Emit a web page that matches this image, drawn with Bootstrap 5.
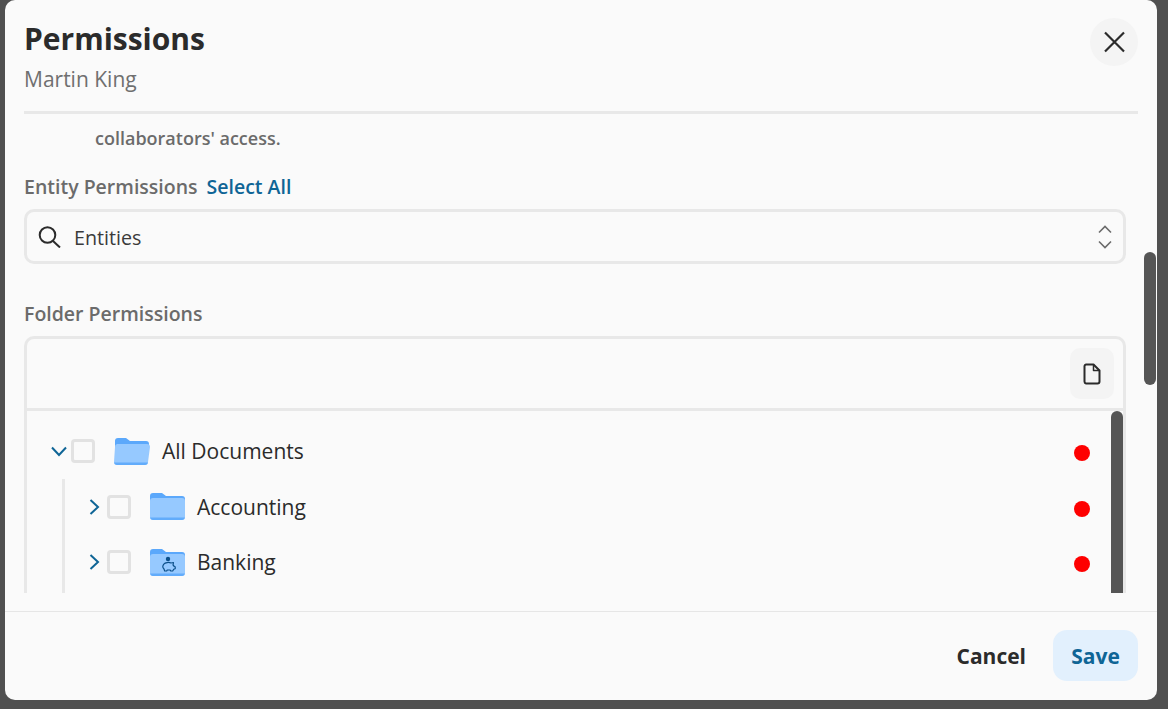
<!DOCTYPE html>
<html lang="en">
  <head>
    <meta charset="UTF-8" />
    <meta name="viewport" content="width=device-width, initial-scale=1" />
    <title>Permissions</title>
    <link
      href="https://cdn.jsdelivr.net/npm/bootstrap@5.3.0/dist/css/bootstrap.min.css"
      rel="stylesheet"
    />
    <style>
      html, body { height: 100%; overflow: hidden; }
      body { background: #505050; font-family: "Open Sans", sans-serif; color: #2b2b2b; }
      .perm-dialog { width: 1152px; height: 700px; margin-left: 5px; background: #fafafa; border-radius: 10px; position: relative; }
      .perm-head { height: 114px; margin: 0 19px; border-bottom: 3px solid #e8e8e8; position: relative; }
      .perm-title { font-size: 30px; font-weight: 700; line-height: 38px; padding-top: 20px; margin: 0; color: #2b2b2b; }
      .perm-sub { font-size: 21px; line-height: 27px; margin-top: 8px; color: #6f6f6f; }
      .perm-close { position: absolute; top: 18px; right: 0; width: 48px; height: 48px; border: 0; padding: 0; border-radius: 50%; background: #f4f4f4; }
      .perm-body { height: 479px; overflow: hidden; padding: 0 31px 0 19px; }
      .perm-note { font-size: 18px; font-weight: 600; line-height: 22px; color: #6b6b6b; padding: 13px 0 0 71px; }
      .perm-label { font-size: 19.500px; font-weight: 600; line-height: 24px; color: #6b6b6b; }
      .perm-entity { margin-top: 23px; gap: 9px; }
      .perm-link { font-size: 19.500px; font-weight: 600; color: #0f6596; text-decoration: none; }
      .perm-select { height: 55px; margin-top: 8px; border: 3px solid #e8e8e8; border-radius: 10px; padding: 0 11px 0 11px; font-size: 19.700px; color: #3a3a3a; }
      .perm-select-text { padding: 2px 0 0 5px; }
      .perm-folder-label { margin-top: 38px; }
      .perm-box { height: 260px; margin-top: 10px; border: 3px solid #e8e8e8; border-bottom: 0; border-radius: 10px 10px 0 0; }
      .perm-tools { height: 72px; border-bottom: 3px solid #e8e8e8; padding: 9px 9px 0 0; }
      .perm-tool { width: 44px; height: 51px; border: 0; padding: 0; border-radius: 10px; background: #f4f4f4; }
      .perm-tree { padding: 12px 0 0 22px; }
      .perm-row { height: 55.500px; padding-right: 33px; font-size: 21px; color: #2b2b2b; }
      .perm-name { padding-top: 2px; }
      .perm-nest { margin-left: 13px; padding-left: 20px; border-left: 3px solid #e8e8e8; height: 115px; }
      .perm-caret { width: 22px; flex: none; padding-right: 3px; }
      .perm-check { width: 24px; height: 24px; flex: none; border: 3px solid #e2e2e2; border-radius: 4px; background: #fafafa; }
      .perm-folder { flex: none; margin-left: 19px; margin-right: 12px; }
      .perm-dot { width: 16px; height: 16px; flex: none; border-radius: 50%; background: #fe0000; margin-top: 4px; }
      .perm-foot { height: 89px; border-top: 1px solid #e6e6e6; margin-top: 18px; padding: 18px 19px 0 0; }
      .perm-cancel { border: 0; background: none; font-size: 21px; font-weight: 700; color: #2b2b2b; padding: 2px 27px 0 0; height: 51px; }
      .perm-save { border: 0; width: 85px; height: 51px; border-radius: 14px; background: #e2f0fd; font-size: 21px; font-weight: 700; color: #0f6596; padding: 2px 0 0; }
      .perm-scroll { position: absolute; width: 12px; border-radius: 6px; background: #555; }
      .perm-scroll-outer { left: 1139px; top: 252px; height: 133px; }
      .perm-scroll-inner { left: 1106px; top: 411px; height: 182px; border-radius: 6px 6px 0 0; }
    </style>
  </head>
  <body>
    <div class="perm-dialog">
      <div class="perm-head">
        <h1 class="perm-title">Permissions</h1>
        <div class="perm-sub">Martin King</div>
        <button type="button" class="perm-close d-flex align-items-center justify-content-center" aria-label="Close">
          <svg width="24" height="24" viewBox="0 0 24 24" fill="none" stroke="#2b2b2b" stroke-width="2.200"><path d="M3 2.500 22 21.500M22 2.500 3 21.500" /></svg>
        </button>
      </div>

      <div class="perm-body">
        <div class="perm-note">collaborators' access.</div>

        <div class="d-flex align-items-baseline perm-entity">
          <span class="perm-label">Entity Permissions</span>
          <a href="#" class="perm-link">Select All</a>
        </div>
        <div class="perm-select d-flex align-items-center">
          <svg width="23" height="22" viewBox="0 0 23 22" fill="none" stroke="#2b2b2b" stroke-width="2"><circle cx="9.500" cy="9" r="7.800" /><path d="m15 15 7 6.500" /></svg>
          <span class="ms-2 flex-grow-1 perm-select-text">Entities</span>
          <svg width="14" height="24" viewBox="0 0 14 24" fill="none" stroke="#6b6b6b" stroke-width="1.600"><path d="M1 7.500 7 1.500 13 7.500M1 16.500 7 22.500 13 16.500" /></svg>
        </div>

        <div class="perm-label perm-folder-label">Folder Permissions</div>
        <div class="perm-box">
          <div class="perm-tools d-flex justify-content-end">
            <button type="button" class="perm-tool d-flex align-items-center justify-content-center" aria-label="New document">
              <svg width="18" height="22" viewBox="0 0 18 22" fill="none" stroke="#2b2b2b" stroke-width="2" stroke-linejoin="round"><path d="M3 1.500H10.500L16.500 7.500V18.500A2 2 0 0 1 14.500 20.500H3A2 2 0 0 1 1.500 18.500V3A2 2 0 0 1 3 1.500Z" /><path d="M10.500 1.500V7.500H16.500" stroke-width="1.500" /></svg>
            </button>
          </div>
          <div class="perm-tree">
            <div class="perm-row d-flex align-items-center">
              <span class="perm-caret d-flex align-items-center justify-content-center">
                <svg width="18" height="11" viewBox="0 0 18 11" fill="none" stroke="#0f6596" stroke-width="2"><path d="M2 1.500 9 9 16 1.500" /></svg>
              </span>
              <span class="perm-check"></span>
              <svg class="perm-folder" width="36" height="27" viewBox="0 0 36 27"><path d="M1 3a3 3 0 0 1 3-3h8l4 3h16a3 3 0 0 1 3 3v3H1Z" fill="#5ba8fb" /><path d="M3 6h30a3 3 0 0 1 3 3l-2 15a3 3 0 0 1-3 3H3a3 3 0 0 1-3-3l1-15a3 3 0 0 1 2-3Z" fill="#96c9ff" /><path d="M0 24.500h34a3 3 0 0 1-3 2.500H3a3 3 0 0 1-3-2.500Z" fill="#62acfb" /></svg>
              <span class="flex-grow-1 perm-name">All Documents</span>
              <span class="perm-dot"></span>
            </div>
            <div class="perm-nest">
              <div class="perm-row d-flex align-items-center">
                <span class="perm-caret d-flex align-items-center justify-content-center">
                  <svg width="11" height="18" viewBox="0 0 11 18" fill="none" stroke="#0f6596" stroke-width="2"><path d="M1.500 2 9 9 1.500 16" /></svg>
                </span>
                <span class="perm-check"></span>
                <svg class="perm-folder" width="35" height="27" viewBox="0 0 35 27"><path d="M0 3a3 3 0 0 1 3-3h9l4 3h16a3 3 0 0 1 3 3v3H0Z" fill="#5ba8fb" /><rect y="5" width="35" height="22" rx="3" fill="#96c9ff" /><path d="M0 24.500h35a3 3 0 0 1-3 2.500H3a3 3 0 0 1-3-2.500Z" fill="#62acfb" /></svg>
                <span class="flex-grow-1 perm-name">Accounting</span>
                <span class="perm-dot"></span>
              </div>
              <div class="perm-row d-flex align-items-center">
                <span class="perm-caret d-flex align-items-center justify-content-center">
                  <svg width="11" height="18" viewBox="0 0 11 18" fill="none" stroke="#0f6596" stroke-width="2"><path d="M1.500 2 9 9 1.500 16" /></svg>
                </span>
                <span class="perm-check"></span>
                <svg class="perm-folder" width="35" height="27" viewBox="0 0 35 27"><path d="M0 3a3 3 0 0 1 3-3h9l4 3h16a3 3 0 0 1 3 3v3H0Z" fill="#5ba8fb" /><rect y="5" width="35" height="22" rx="3" fill="#96c9ff" /><path d="M0 24.500h35a3 3 0 0 1-3 2.500H3a3 3 0 0 1-3-2.500Z" fill="#62acfb" /><circle cx="18" cy="10" r="2.200" fill="#0b4f8a" /><path d="M14 15c1-1.500 5-2 7-1l2.500-.5-.5 2.500c.6.500 1 1 1.200 1.500l1 .3v2l-1.500.5-1 1.700h-2l-.5-1h-3l-.5 1h-2l-.8-2.200c-1.600-1-1.400-3.300.1-4.800Z" fill="none" stroke="#0b4f8a" stroke-width="1.200" stroke-linejoin="round" /></svg>
                <span class="flex-grow-1 perm-name">Banking</span>
                <span class="perm-dot"></span>
              </div>
            </div>
          </div>
        </div>
      </div>

      <div class="perm-foot d-flex justify-content-end align-items-start">
        <button type="button" class="perm-cancel">Cancel</button>
        <button type="button" class="perm-save">Save</button>
      </div>

      <div class="perm-scroll perm-scroll-outer"></div>
      <div class="perm-scroll perm-scroll-inner"></div>
    </div>

    <script src="https://cdn.jsdelivr.net/npm/bootstrap@5.3.0/dist/js/bootstrap.bundle.min.js"></script>
  </body>
</html>
